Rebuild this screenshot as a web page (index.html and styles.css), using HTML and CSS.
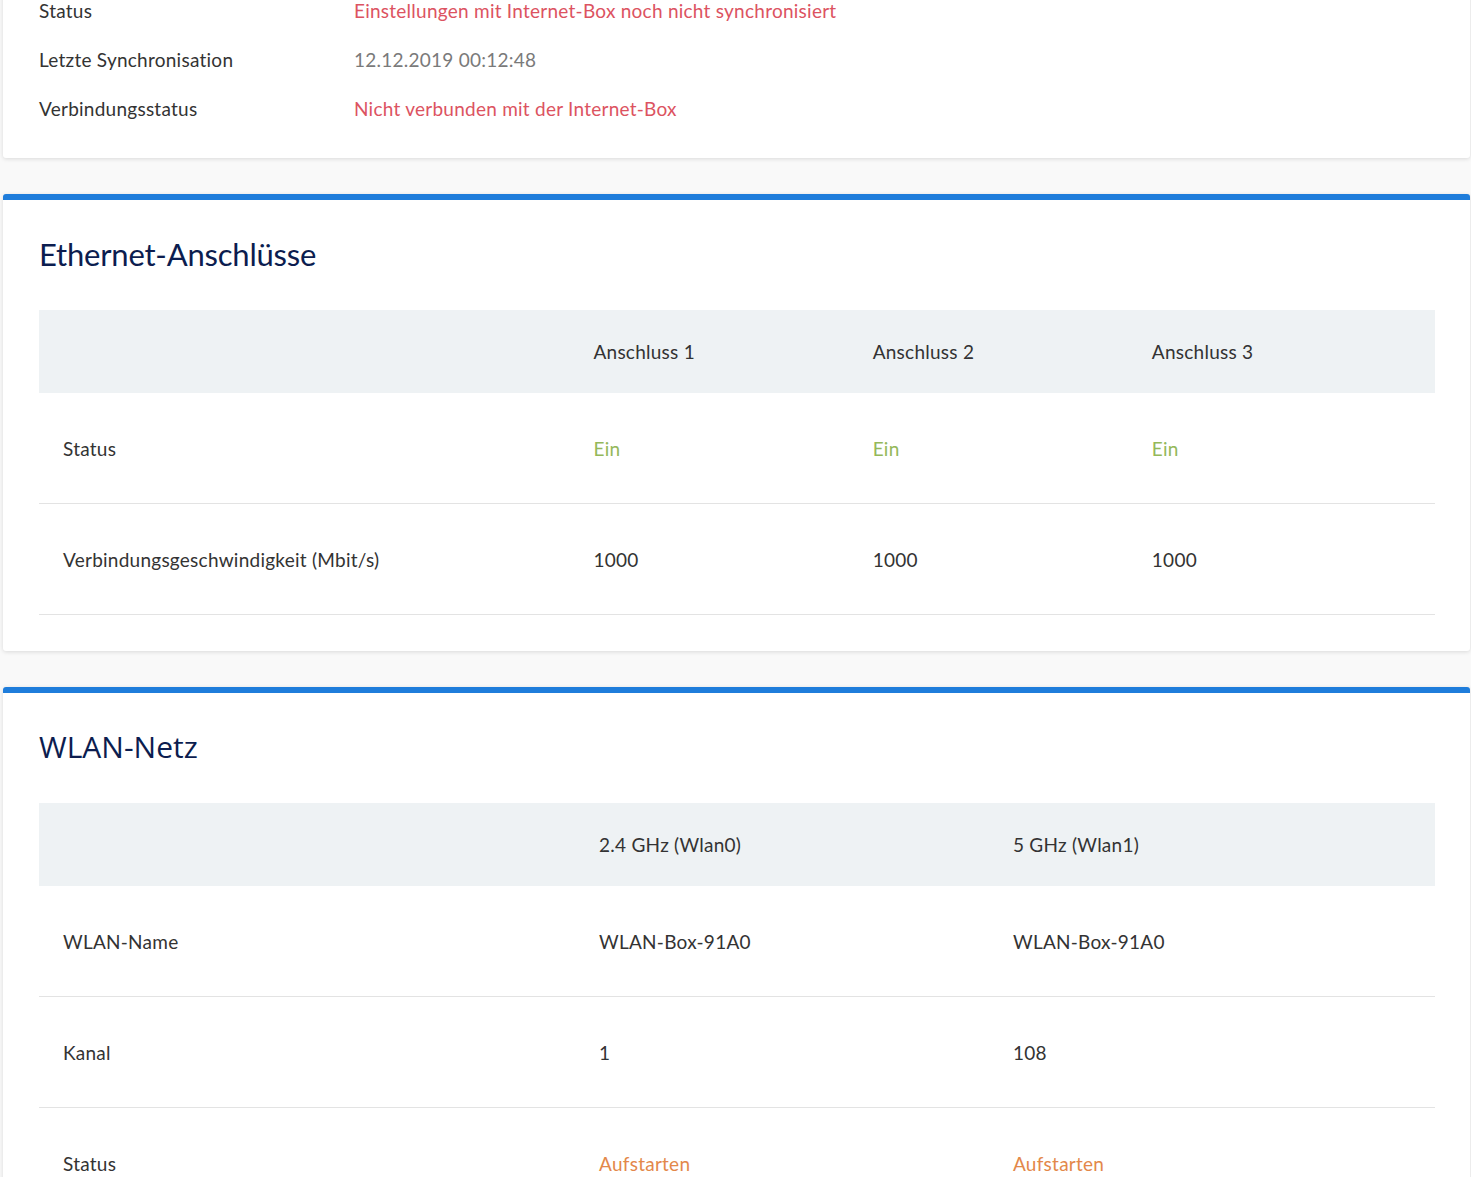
FILE: index.html
```html
<!DOCTYPE html>
<html lang="de">
<head>
<meta charset="utf-8">
<title>Internet-Box</title>
<link rel="stylesheet" href="styles.css">
</head>
<body>
<div class="page">
  <section class="card card-plain">
    <div class="kv">
      <div class="kv-row"><span class="kv-label">Status</span><span class="kv-value red">Einstellungen mit Internet-Box noch nicht synchronisiert</span></div>
      <div class="kv-row"><span class="kv-label">Letzte Synchronisation</span><span class="kv-value gray">12.12.2019 00:12:48</span></div>
      <div class="kv-row"><span class="kv-label">Verbindungsstatus</span><span class="kv-value red">Nicht verbunden mit der Internet-Box</span></div>
    </div>
  </section>

  <section class="card card-accent">
    <h2 class="card-title title-eth">Ethernet-Anschlüsse</h2>
    <table class="data eth">
      <colgroup><col class="c-label"><col class="c-eth"><col class="c-eth"><col></colgroup>
      <thead>
        <tr><th></th><th>Anschluss 1</th><th>Anschluss 2</th><th>Anschluss 3</th></tr>
      </thead>
      <tbody>
        <tr><td>Status</td><td class="green">Ein</td><td class="green">Ein</td><td class="green">Ein</td></tr>
        <tr><td>Verbindungsgeschwindigkeit (Mbit/s)</td><td>1000</td><td>1000</td><td>1000</td></tr>
      </tbody>
    </table>
  </section>

  <section class="card card-accent">
    <h2 class="card-title title-wlan">WLAN-Netz</h2>
    <table class="data wlan">
      <colgroup><col class="c-label2"><col class="c-wlan"><col></colgroup>
      <thead>
        <tr><th></th><th>2.4 GHz (Wlan0)</th><th>5 GHz (Wlan1)</th></tr>
      </thead>
      <tbody>
        <tr><td>WLAN-Name</td><td>WLAN-Box-91A0</td><td>WLAN-Box-91A0</td></tr>
        <tr><td>Kanal</td><td>1</td><td>108</td></tr>
        <tr><td>Status</td><td class="orange">Aufstarten</td><td class="orange">Aufstarten</td></tr>
      </tbody>
    </table>
  </section>
</div>
</body>
</html>
```
FILE: styles.css
```css
html, body {
  margin: 0;
  padding: 0;
  background: #f9f9f9;
}
body {
  font-family: "Lato", "Open Sans", sans-serif;
  font-size: 19px;
  letter-spacing: 0.25px;
  color: #333;
  overflow: hidden;
}
.page {
  display: flex;
  flex-direction: column;
  gap: 36px;
  padding: 0 1px 40px 3px;
  margin-top: -14px;
}
.card {
  background: #fff;
  border-radius: 3px;
  box-shadow: 0 1px 4px rgba(0, 0, 0, 0.13);
}
.card-plain {
  padding: 0 36px 25px 36px;
}
.card-accent {
  border-top: 6px solid #1f7ddb;
  padding: 34px 35px 36px 36px;
}
.kv-row {
  display: flex;
  align-items: center;
  height: 49px;
}
.kv-label {
  width: 315px;
  color: #333;
}
.red { color: #dc5361; }
.gray { color: #7a7a7a; }
.green { color: #94b85a; }
.orange { color: #e3884a; }

.card-title {
  margin: 0 0 36px 0;
  font-weight: 400;
  font-size: 31px;
  letter-spacing: -0.2px;
  line-height: 40px;
  color: #0c1d4f;
}
.title-wlan {
  font-family: "Open Sans", sans-serif;
  font-size: 30px;
  letter-spacing: 0;
}
.data {
  width: 100%;
  border-collapse: collapse;
  table-layout: fixed;
}
.c-label { width: 38%; }
.c-eth { width: 20%; }
.c-label2 { width: 38.4%; }
.c-wlan { width: 29.65%; }
.data th {
  background: #eef2f4;
  height: 83px;
  padding: 0 24px;
  text-align: left;
  font-weight: 400;
  color: #333;
}
.data td {
  height: 110px;
  padding: 0 24px;
  border-bottom: 1px solid #e3e3e3;
  vertical-align: middle;
}
.data td:first-child { color: #333; }
```
